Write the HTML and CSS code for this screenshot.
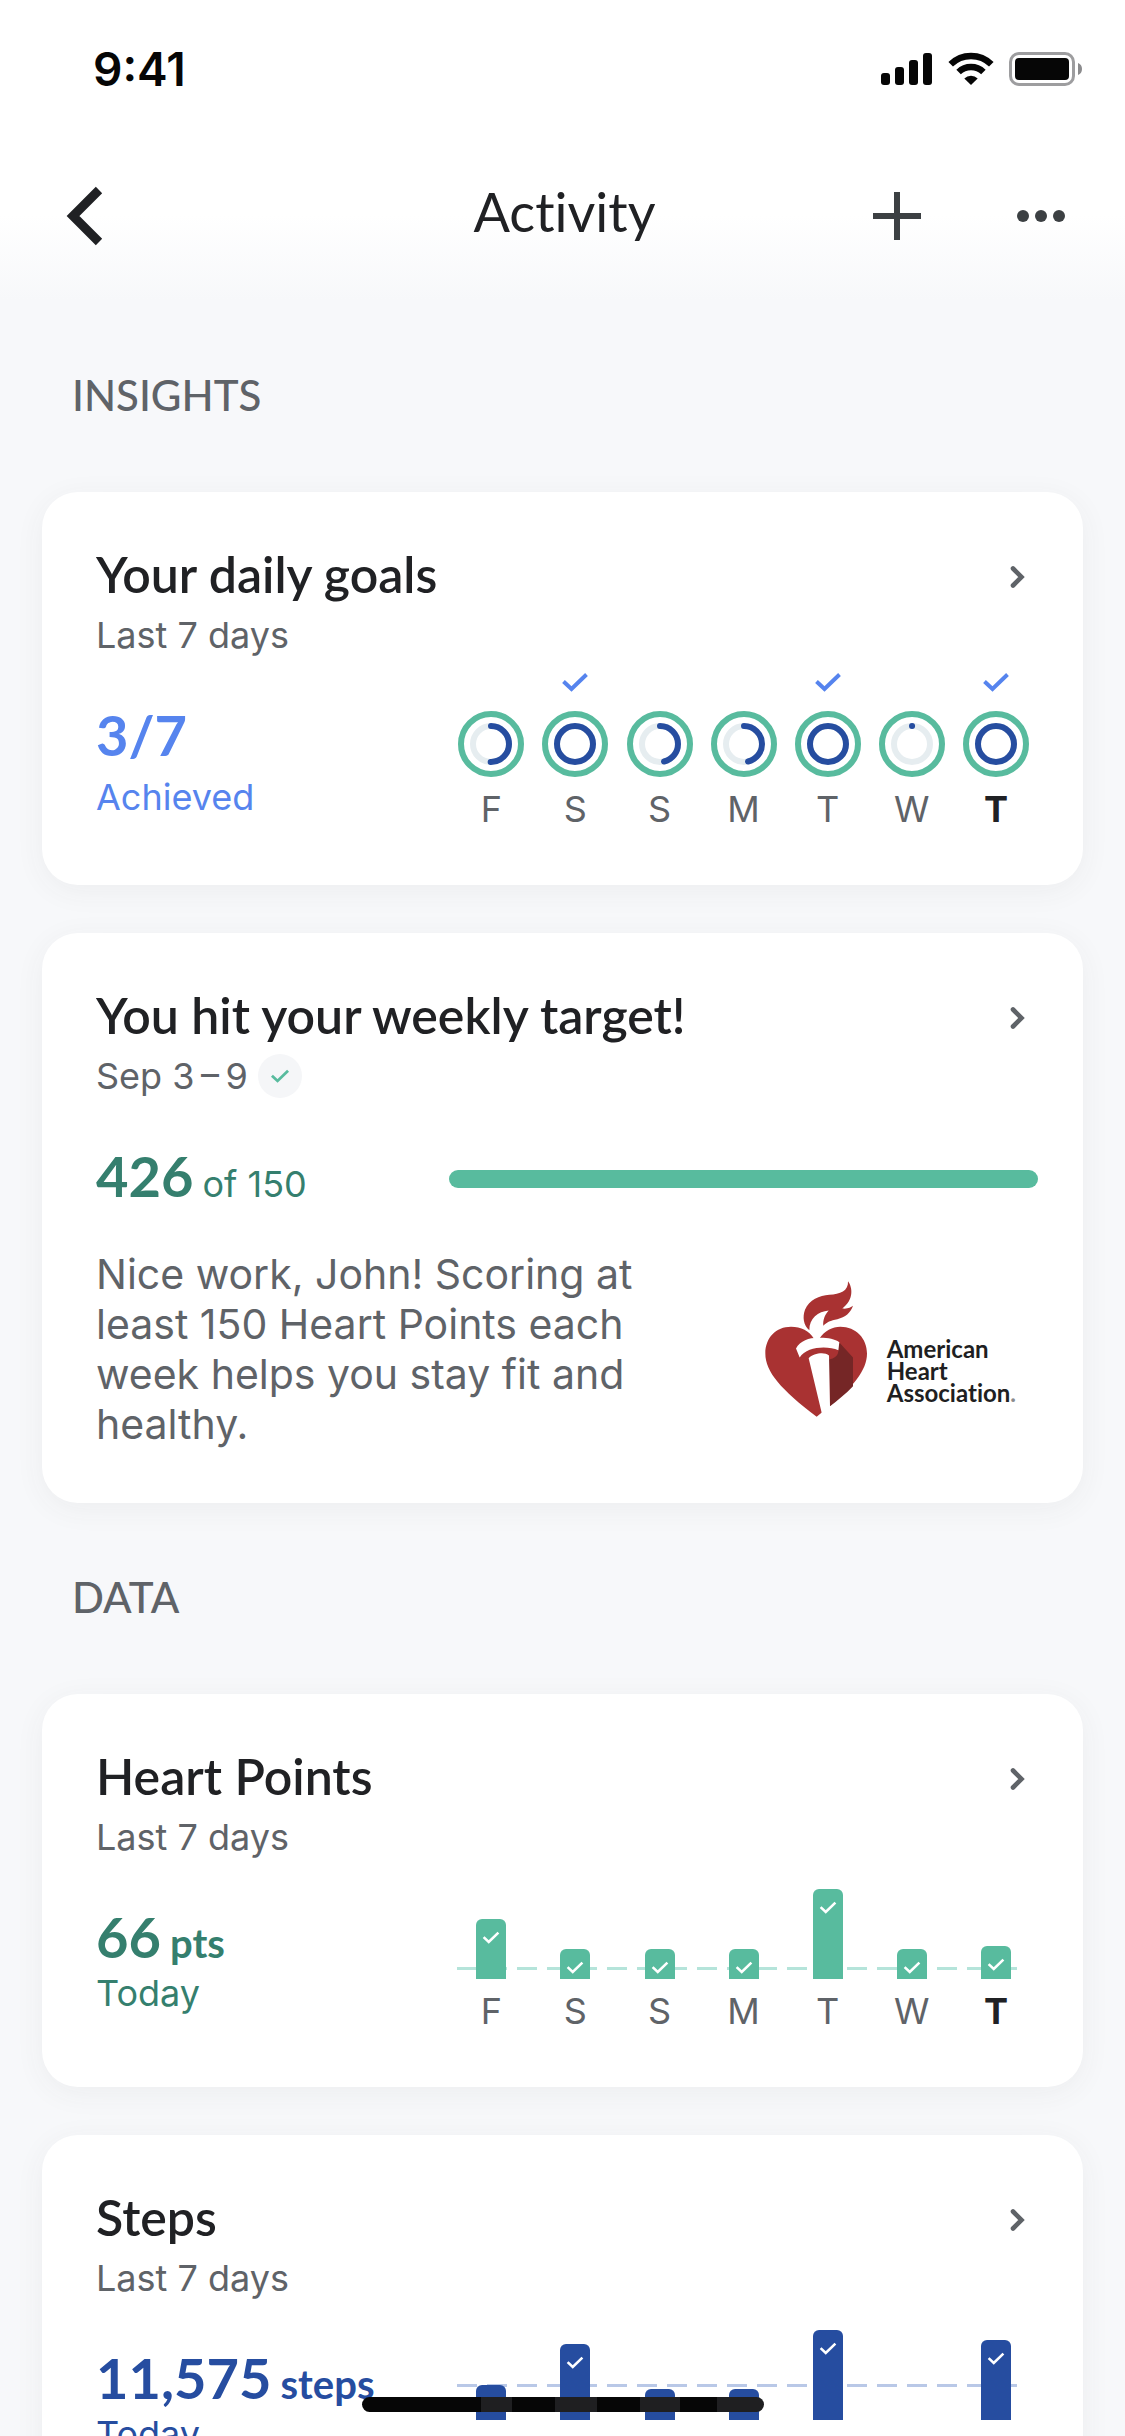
FILE: index.html
```
<!DOCTYPE html>
<html lang="en">
<head>
    <meta charset="UTF-8">
    <meta name="viewport" content="width=device-width, initial-scale=1.0">
    <title>Activity</title>
    <link rel="stylesheet" href="styles.css">
</head>
<body>
    <svg class="defs" aria-hidden="true">
        <symbol id="check" viewBox="0 0 28 20">
            <path d="M2.5 9.5 L10.5 17 L25.5 2.5" fill="none" stroke="currentColor" stroke-width="4"/>
        </symbol>
        <symbol id="chevron" viewBox="0 0 42 42">
            <path d="M17 15.5 L25.5 24 L17 32.5" fill="none" stroke="currentColor" stroke-width="4.6" stroke-linecap="round"/>
        </symbol>
    </svg>

    <div class="status-bar">
        <span class="time">9:41</span>
        <div class="status-icons">
            <svg width="52" height="34" viewBox="0 0 52 34">
                <rect x="0" y="21" width="9" height="12" rx="3"/>
                <rect x="14" y="15" width="9" height="18" rx="3"/>
                <rect x="28" y="8" width="9" height="25" rx="3"/>
                <rect x="42" y="1" width="9" height="32" rx="3"/>
            </svg>
            <svg width="46" height="34" viewBox="0 0 46 34">
                <g fill="none" stroke="#060606" stroke-width="6.5">
                    <path d="M2.7 12.2 A29 29 0 0 1 43.3 12.2"/>
                    <path d="M10.6 20 A18 18 0 0 1 35.4 20"/>
                </g>
                <path d="M23 33 L16.3 26.4 A9.6 9.6 0 0 1 29.7 26.4 Z"/>
            </svg>
            <svg width="74" height="34" viewBox="0 0 74 34">
                <rect x="1.5" y="1.5" width="63" height="31" rx="8.5" fill="none" stroke="#9d9d9f" stroke-width="3"/>
                <rect x="6" y="6" width="54" height="22" rx="4"/>
                <path d="M69 11 A6.5 6.5 0 0 1 69 23 Z" fill="#8b8b8d"/>
            </svg>
        </div>
    </div>

    <header class="app-bar">
        <button class="icon-btn" aria-label="Back">
            <svg width="40" height="60" viewBox="0 0 40 60"><path d="M35 4 L9 30 L35 56" fill="none" stroke="#202124" stroke-width="9"/></svg>
        </button>
        <h1>Activity</h1>
        <div class="app-actions">
            <button class="icon-btn" aria-label="Add">
                <svg width="48" height="48" viewBox="0 0 48 48"><path d="M24 0 V48 M0 24 H48" stroke="#3c4043" stroke-width="6"/></svg>
            </button>
            <button class="icon-btn" aria-label="More">
                <svg width="48" height="48" viewBox="0 0 48 48" fill="#3c4043"><circle cx="6" cy="24" r="6"/><circle cx="24" cy="24" r="6"/><circle cx="42" cy="24" r="6"/></svg>
            </button>
        </div>
    </header>

    <main>
        <h2 class="section-title">Insights</h2>
        <div class="cards">
            <article class="card">
                <div class="card-head">
                    <h3>Your daily goals</h3>
                    <button class="open-btn" aria-label="Open daily goals"><svg><use href="#chevron"/></svg></button>
                </div>
                <p class="sub">Last 7 days</p>
                <div class="card-body goals">
                    <div>
                        <p class="value">3/7</p>
                        <p class="caption">Achieved</p>
                    </div>
                    <div class="chart" id="goalsChart"></div>
                </div>
            </article>

            <article class="card">
                <div class="card-head">
                    <h3>You hit your weekly target!</h3>
                    <button class="open-btn" aria-label="Open weekly target"><svg><use href="#chevron"/></svg></button>
                </div>
                <p class="sub">Sep 3&thinsp;–&thinsp;9 <span class="badge"><svg><use href="#check"/></svg></span></p>
                <div class="card-body points">
                    <p class="value">426 <span class="of">of 150</span></p>
                    <div class="progress"></div>
                </div>
                <div class="message">
                    <p>Nice work, John! Scoring at least 150 Heart Points each week helps you stay fit and healthy.</p>
                    <div class="aha">
                        <svg width="102" height="136" viewBox="27 33 306 407">
                            <!-- heart -->
                            <path fill="#a93232" d="M182 440 C75 358 28 305 28 250 C28 203 60 170 105 170 C135 170 160 182 174 206 L190 206 C205 182 230 170 253 170 C300 170 333 205 333 250 C333 300 290 352 222 407 Z"/>
                            <!-- torch shadow -->
                            <path fill="#752626" d="M250 217 L291 262 V348 C270 370 245 390 222 408 L219 268 C235 265 248 255 247 240 Z"/>
                            <!-- torch -->
                            <path fill="#fff" d="M158 264 C172 250 205 244 219 256 L222 409 L223 440 L197 440 L197 428 Z"/>
                            <path fill="#fff" d="M120 235 C132 212 160 203 185 203 C212 202 236 206 250 216 L247 240 C215 226 152 228 131 262 Z"/>
                            <!-- flame -->
                            <path fill="#a93232" d="M276 33 C290 52 294 88 259 115 C275 117 284 112 291 107 C284 128 268 142 244 147 C224 151 212 155 202 167 C200 150 206 134 218 121 C186 124 160 144 160 180 C142 166 139 140 147 119 C160 88 190 77 220 74 C252 72 278 62 276 33 Z"/>
                        </svg>
                        <div class="aha-name">American<br>Heart<br>Association<span>.</span></div>
                    </div>
                </div>
            </article>
        </div>

        <h2 class="section-title">Data</h2>
        <div class="cards">
            <article class="card">
                <div class="card-head">
                    <h3>Heart Points</h3>
                    <button class="open-btn" aria-label="Open heart points"><svg><use href="#chevron"/></svg></button>
                </div>
                <p class="sub">Last 7 days</p>
                <div class="card-body points">
                    <div>
                        <p class="value">66 <span class="unit">pts</span></p>
                        <p class="caption">Today</p>
                    </div>
                    <div class="chart bars" id="pointsChart"></div>
                </div>
            </article>

            <article class="card">
                <div class="card-head">
                    <h3>Steps</h3>
                    <button class="open-btn" aria-label="Open steps"><svg><use href="#chevron"/></svg></button>
                </div>
                <p class="sub">Last 7 days</p>
                <div class="card-body steps">
                    <div>
                        <p class="value">11,575 <span class="unit">steps</span></p>
                        <p class="caption">Today</p>
                    </div>
                    <div class="chart bars" id="stepsChart"></div>
                </div>
            </article>
        </div>
    </main>

    <div class="home-indicator"></div>

    <script src="script.js"></script>
</body>
</html>
```
FILE: styles.css
```
* {
    box-sizing: border-box;
    margin: 0;
    padding: 0;
}

body {
    height: 100vh;
    overflow: hidden;
    background: linear-gradient(#fff 215px, #f7f8fa 300px);
    font-family: Inter, "Liberation Sans", sans-serif;
    font-size: 36px;
    line-height: 44px;
    color: #5f6368;
}

h1, h2, h3, .value {
    font-family: Lato, "Open Sans", sans-serif;
    font-variant-ligatures: none;
}

button {
    background: none;
    border: none;
    cursor: pointer;
}

svg {
    display: block;
}

.defs {
    position: absolute;
    width: 0;
    height: 0;
}

/* Status bar */
.status-bar {
    display: flex;
    justify-content: space-between;
    align-items: center;
    height: 138px;
    padding: 0 42px 0 93px;
}

.time {
    font-size: 46px;
    font-weight: 600;
    color: #060606;
}

.status-icons {
    display: flex;
    gap: 15px;
    fill: #060606;
}

/* App bar */
.app-bar {
    display: grid;
    grid-template-columns: 1fr auto 1fr;
    align-items: center;
    height: 163px;
    padding: 0 60px 8px 64px;
}

.app-bar h1 {
    font-size: 54px;
    line-height: 66px;
    font-weight: 400;
    color: #202124;
    padding-bottom: 8px;
}

.icon-btn {
    justify-self: start;
}

.app-actions {
    display: flex;
    justify-content: flex-end;
    gap: 96px;
}

/* Sections and cards */
.section-title {
    padding: 69px 72px 72px;
    font-size: 42px;
    line-height: 50px;
    font-weight: 500;
    text-transform: uppercase;
}

.cards {
    display: flex;
    flex-direction: column;
    gap: 48px;
    padding: 0 42px;
}

.card {
    padding: 52px 45px 54px 54px;
    background: #fff;
    border-radius: 36px;
    box-shadow: 0 6px 30px rgba(60, 64, 67, 0.06);
}

.card-head {
    display: flex;
    justify-content: space-between;
    align-items: center;
}

.card-head h3 {
    font-size: 50px;
    line-height: 60px;
    font-weight: 600;
    color: #202124;
}

.open-btn {
    color: #5f6368;
}

.open-btn svg {
    width: 42px;
    height: 42px;
}

.sub {
    display: flex;
    align-items: center;
    gap: 10px;
    margin-top: 9px;
}

.badge {
    display: flex;
    align-items: center;
    justify-content: center;
    width: 44px;
    height: 44px;
    border-radius: 50%;
    background: #f5f6f8;
    color: #58bb9e;
}

.badge svg {
    width: 20px;
    height: 14px;
}

.card-body {
    display: grid;
    grid-template-columns: 3fr 5fr;
}

.goals { color: #5684ee; }
.points { color: #357f6e; }
.steps { color: #264da0; }

.value {
    display: flex;
    align-items: baseline;
    gap: 9px;
    margin-top: 44px;
    font-size: 56px;
    line-height: 68px;
    font-weight: 700;
    white-space: nowrap;
}

.value span {
    line-height: 44px;
}

.value .unit {
    font-size: 40px;
}

.value .of {
    font-family: Inter, "Liberation Sans", sans-serif;
    font-size: 36px;
    font-weight: 400;
}

.goals .caption {
    margin-top: 6px;
}

.progress {
    align-self: end;
    height: 18px;
    margin-bottom: 22px;
    border-radius: 9px;
    background: #58bb9e;
}

.message {
    display: flex;
    justify-content: space-between;
    align-items: flex-start;
    margin-top: 39px;
    padding-right: 22px;
    font-size: 41px;
    line-height: 50px;
}

.message p {
    width: 56%;
    min-width: 540px;
}

.aha {
    display: flex;
    align-items: center;
    gap: 20px;
    margin-top: 32px;
}

.aha-name {
    margin-top: 44px;
    font-family: Lato, "Open Sans", sans-serif;
    font-size: 24px;
    line-height: 22px;
    font-weight: 700;
    font-variant-ligatures: none;
    color: #1f1f22;
}

.aha-name span {
    color: #8b8b8d;
}

/* Week charts */
.chart {
    position: relative;
    display: grid;
    grid-template-columns: repeat(7, 1fr);
    color: #5684ee;
}

.day {
    display: flex;
    flex-direction: column;
    align-items: center;
}

.day-plot {
    display: flex;
    flex-direction: column;
    align-items: center;
    justify-content: flex-end;
    height: 120px;
    margin-bottom: 10px;
}

.day-label {
    color: #5f6368;
}

.day:last-child .day-label {
    font-weight: 700;
    color: #202124;
}

.goal-check {
    width: 28px;
    height: 20px;
    margin-bottom: 19px;
}

.ring {
    width: 66px;
    height: 66px;
}

.bars::before {
    content: "";
    position: absolute;
    top: 108px;
    left: 8px;
    right: 20px;
    height: 3px;
    background: repeating-linear-gradient(90deg, #b5e4da 0 20px, transparent 20px 30px);
}

.steps .bars::before {
    top: 84px;
    background: repeating-linear-gradient(90deg, #b9c8e7 0 20px, transparent 20px 30px);
}

.bar {
    position: relative;
    width: 30px;
    padding-top: 12px;
    border-radius: 6px 6px 0 0;
    background: #58bb9e;
    color: #fff;
}

.steps .bar {
    background: #264da0;
}

.bar svg {
    width: 18px;
    height: 13px;
    margin: 0 auto;
}

.home-indicator {
    position: fixed;
    bottom: 24px;
    left: 50%;
    width: 402px;
    height: 15px;
    margin-left: -201px;
    border-radius: 8px;
    background: linear-gradient(90deg, #060606 119px, #1f1f21 119px 150px, #060606 150px 193px, #1f1f21 193px 235px, #060606 235px 278px, #1f1f21 278px 318px, #060606 318px 355px, #1f1f21 355px);
}
```
FILE: script.js
```
const days = ['F', 'S', 'S', 'M', 'T', 'W', 'T'];

// share of the step goal reached each day
const goals = [0.5, 1, 0.46, 0.46, 1, 0.001, 1];

// bar heights and whether the goal was met
const points = [[60, true], [30, true], [30, true], [30, true], [90, true], [30, true], [33, true]];
const steps = [[35, false], [76, true], [31, false], [31, false], [90, true], [0, false], [80, true]];

const check = cls => `<svg class="${cls}"><use href="#check"/></svg>`;

function ring(share) {
    const len = 2 * Math.PI * 18;
    return `<svg class="ring" viewBox="0 0 66 66" fill="none" stroke-width="6">
        <circle cx="33" cy="33" r="30" stroke="#58bb9e"/>
        <circle cx="33" cy="33" r="18" stroke="#e6edf0"/>
        <circle cx="33" cy="33" r="18" stroke="#264da0" stroke-linecap="round"
            stroke-dasharray="${share * len} ${len}" transform="rotate(-90 33 33)"/>
    </svg>`;
}

function drawChart(id, plots) {
    document.getElementById(id).innerHTML = plots.map((plot, i) => `
        <div class="day">
            <div class="day-plot">${plot}</div>
            <span class="day-label">${days[i]}</span>
        </div>`).join('');
}

function bar([height, met]) {
    return height ? `<div class="bar" style="height: ${height}px">${met ? check('') : ''}</div>` : '';
}

drawChart('goalsChart', goals.map(g => (g === 1 ? check('goal-check') : '') + ring(g)));
drawChart('pointsChart', points.map(bar));
drawChart('stepsChart', steps.map(bar));
```
